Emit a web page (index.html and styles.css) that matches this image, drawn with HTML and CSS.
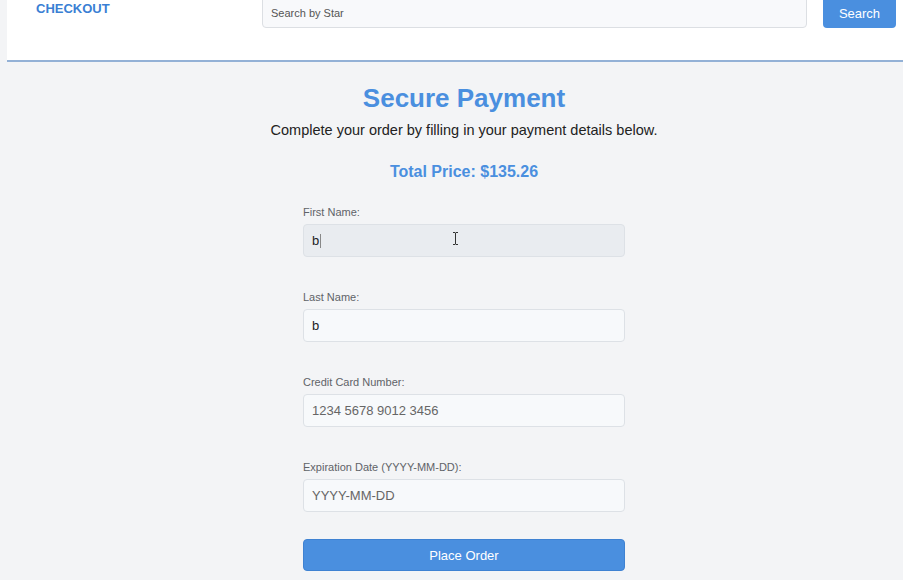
FILE: index.html
```html
<!DOCTYPE html>
<html lang="en">
<head>
<meta charset="utf-8">
<title>Checkout</title>
<link rel="stylesheet" href="styles.css">
</head>
<body>
<header class="topbar">
  <div class="topbar-row">
    <a class="brand" href="#">CHECKOUT</a>
    <form class="search">
      <input class="search-input" type="text" placeholder="Search by Star">
      <button class="search-btn" type="button">Search</button>
    </form>
  </div>
</header>
<main class="page">
  <h1 class="title">Secure Payment</h1>
  <p class="subtitle">Complete your order by filling in your payment details below.</p>
  <h2 class="total">Total Price: $135.26</h2>
  <form class="payment">
    <div class="field">
      <label class="label">First Name:</label>
      <div class="input-wrap">
        <div class="input focused"><span>b</span><span class="caret"></span></div>
        <svg class="ibeam" width="7" height="13" viewBox="0 0 7 13"><path d="M1 0.5h2l0.5 0.5 0.5-0.5h2M3.5 1v11M1 12.5h2l0.5-0.5 0.5 0.5h2" fill="none" stroke="#333" stroke-width="1"/></svg>
      </div>
    </div>
    <div class="field">
      <label class="label">Last Name:</label>
      <div class="input"><span>b</span></div>
    </div>
    <div class="field">
      <label class="label">Credit Card Number:</label>
      <div class="input placeholder">1234 5678 9012 3456</div>
    </div>
    <div class="field">
      <label class="label">Expiration Date (YYYY-MM-DD):</label>
      <div class="input placeholder">YYYY-MM-DD</div>
    </div>
    <button class="submit" type="button">Place Order</button>
  </form>
</main>
</body>
</html>
```
FILE: styles.css
```css
* { box-sizing: border-box; }
html, body { margin: 0; padding: 0; }
body {
  background: #f3f4f6;
  font-family: "Liberation Sans", Arial, sans-serif;
  color: #222;
  width: 903px;
  height: 580px;
  overflow: hidden;
}
.topbar {
  display: flow-root;
  margin-left: 7px;
  height: 62px;
  background: #ffffff;
  border-bottom: 2px solid #93b1d6;
}
.topbar-row {
  display: flex;
  align-items: flex-start;
  margin-top: -6px;
  padding-left: 29px;
}
.brand {
  font-size: 13px;
  font-weight: bold;
  color: #3a7fd4;
  text-decoration: none;
  margin-top: 7px;
  width: 226px;
}
.search {
  display: flex;
  gap: 16px;
}
.search-input {
  width: 545px;
  height: 34px;
  border: 1px solid #dcdfe3;
  border-radius: 4px;
  background: #f8f9fb;
  font-family: inherit;
  font-size: 11px;
  padding: 4px 8px 0;
  color: #333;
}
.search-input::placeholder { color: #555; }
.search-btn {
  width: 73px;
  height: 34px;
  border: none;
  border-radius: 4px;
  background: #4a8fdf;
  color: #fff;
  font-family: inherit;
  font-size: 13px;
  padding-top: 6px;
}
.page {
  padding-left: 25px;
  display: flex;
  flex-direction: column;
  align-items: center;
}
.title {
  margin: 21px 0 0;
  font-size: 26px;
  line-height: 30px;
  color: #4a8fdf;
  font-weight: bold;
}
.subtitle {
  margin: 8px 0 0;
  font-size: 14.5px;
  line-height: 18px;
  color: #222;
}
.total {
  margin: 23px 0 0;
  font-size: 16px;
  line-height: 20px;
  color: #4a8fdf;
  font-weight: bold;
}
.payment {
  width: 322px;
  margin-top: 24px;
  display: flex;
  flex-direction: column;
}
.field {
  display: flex;
  flex-direction: column;
  margin-bottom: 34px;
}
.label {
  font-size: 11px;
  line-height: 13px;
  color: #5f6368;
  margin-bottom: 5px;
}
.input-wrap { position: relative; }
.input {
  height: 33px;
  border: 1px solid #dde1e6;
  border-radius: 4px;
  background: #f7f9fb;
  font-size: 13px;
  color: #222;
  padding-left: 8px;
  display: flex;
  align-items: center;
}
.input.focused { background: #e9ecf0; }
.input.placeholder { color: #666; }
.caret {
  display: inline-block;
  width: 1px;
  height: 14px;
  background: #888;
  margin-left: 1px;
}
.ibeam {
  position: absolute;
  left: 149px;
  top: 8px;
}
.submit {
  height: 32px;
  margin-top: -7px;
  border: 1px solid #3f82d2;
  border-radius: 4px;
  background: #4a8fdf;
  color: #fff;
  font-family: inherit;
  font-size: 13px;
}
```
